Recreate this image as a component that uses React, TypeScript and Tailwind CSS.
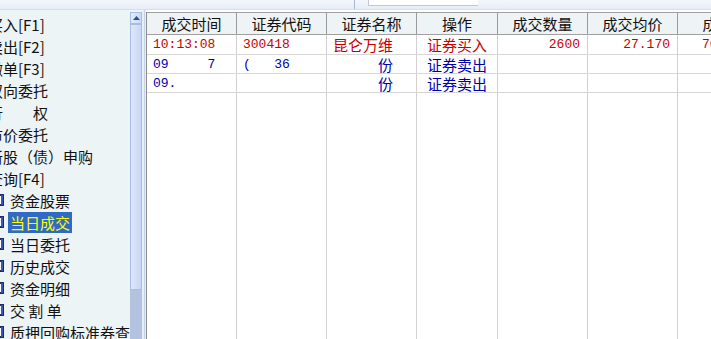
import React from "react";

const cjk = "font-['Noto_Sans_CJK_SC',sans-serif]";
const mono = "font-['Liberation_Mono','Noto_Sans_CJK_SC',monospace]";

const tree: { text: string; sub?: boolean; sel?: boolean }[] = [
  { text: "买入[F1]" },
  { text: "卖出[F2]" },
  { text: "撤单[F3]" },
  { text: "双向委托" },
  { text: "行　　权" },
  { text: "市价委托" },
  { text: "新股（债）申购" },
  { text: "查询[F4]" },
  { text: "资金股票", sub: true },
  { text: "当日成交", sub: true, sel: true },
  { text: "当日委托", sub: true },
  { text: "历史成交", sub: true },
  { text: "资金明细", sub: true },
  { text: "交 割 单", sub: true },
  { text: "质押回购标准券查", sub: true },
];

const cols = [
  { w: "w-[90px]", h: "成交时间" },
  { w: "w-[90px]", h: "证券代码" },
  { w: "w-[90px]", h: "证券名称" },
  { w: "w-[81px]", h: "操作" },
  { w: "w-[90px]", h: "成交数量" },
  { w: "w-[90px]", h: "成交均价" },
  { w: "w-[110px]", h: "成交金额" },
];

type Align = "left" | "right" | "center" | "far";
type Cell = { t: string; kind: "mono" | "cjk"; a: Align };
const rows: { color: string; cells: Cell[]; h: string }[] = [
  {
    color: "text-[#c80000]",
    h: "h-[20px]",
    cells: [
      { t: "10:13:08", kind: "mono", a: "left" },
      { t: "300418", kind: "mono", a: "left" },
      { t: "昆仑万维", kind: "cjk", a: "left" },
      { t: "证券买入", kind: "cjk", a: "center" },
      { t: "2600", kind: "mono", a: "right" },
      { t: "27.170", kind: "mono", a: "right" },
      { t: "70642.00", kind: "mono", a: "far" },
    ],
  },
  {
    color: "text-[#0000a8]",
    h: "h-[19px]",
    cells: [
      { t: "09\u00a0\u00a0\u00a0\u00a0\u00a07", kind: "mono", a: "left" },
      { t: "(\u00a0\u00a0\u00a036", kind: "mono", a: "left" },
      { t: "　　　份", kind: "cjk", a: "left" },
      { t: "证券卖出", kind: "cjk", a: "center" },
      { t: "", kind: "mono", a: "right" },
      { t: "", kind: "mono", a: "right" },
      { t: "", kind: "mono", a: "far" },
    ],
  },
  {
    color: "text-[#0000a8]",
    h: "h-[19px]",
    cells: [
      { t: "09.", kind: "mono", a: "left" },
      { t: "", kind: "mono", a: "left" },
      { t: "　　　份", kind: "cjk", a: "left" },
      { t: "证券卖出", kind: "cjk", a: "center" },
      { t: "", kind: "mono", a: "right" },
      { t: "", kind: "mono", a: "right" },
      { t: "", kind: "mono", a: "far" },
    ],
  },
];

const alignCls: Record<Align, string> = {
  left: "pl-[6px]",
  right: "justify-end pr-[7px]",
  center: "justify-center",
  far: "pl-[24px]",
};

function BookIcon() {
  return (
    <svg width="15" height="14" viewBox="0 0 15 14" className="shrink-0">
      <rect x="1" y="1" width="13" height="12" fill="#1c2a6b" />
      <rect x="3" y="3" width="9" height="8" fill="#ffffff" />
      <rect x="11" y="2" width="2" height="10" fill="#3a56b8" />
    </svg>
  );
}

export default function App() {
  return (
    <div className={`w-[711px] h-[339px] overflow-hidden bg-white flex flex-col ${cjk}`}>
      {/* top bar */}
      <div className="h-[10px] shrink-0 flex items-start bg-gradient-to-b from-[#f4f7fc] to-[#e6edf8] border-b border-[#d5dfee]">
        <div className="w-[354px] h-full" />
        <div className="w-px h-full bg-[#a9b9d2]" />
        <div className="w-[13px]" />
        <div className="w-[110px] h-[6px] bg-white border-l border-b border-[#c0c8d4]" />
      </div>

      <div className="flex flex-1 min-h-0">
        {/* tree */}
        <div className="w-[130px] shrink-0 bg-[#edf4f6] overflow-hidden pt-[3px]">
          {tree.map((it, i) => (
            <div key={i} className="h-[22px] flex items-center whitespace-nowrap text-[15px] leading-none text-[#111]">
              {it.sub ? (
                <div className="flex items-center -ml-[10px]">
                  <BookIcon />
                  <span
                    className={`ml-[3px] px-[2px] h-[21px] flex items-center ${
                      it.sel ? "bg-[#316ac5] text-[#ffff00]" : ""
                    }`}
                  >
                    {it.text}
                  </span>
                </div>
              ) : (
                <span className="-ml-[12px]">{it.text}</span>
              )}
            </div>
          ))}
        </div>

        {/* scrollbar */}
        <div className="w-[12px] shrink-0 flex flex-col pt-[2px] bg-[#eef4f7]">
          <div className="h-[12px] bg-gradient-to-r from-[#e4ecfb] to-[#c9d8f4] border border-[#a6bde6] flex items-center justify-center">
            <svg width="7" height="4" viewBox="0 0 7 4">
              <polygon points="0,4 7,4 3.5,0" fill="#2a4d96" />
            </svg>
          </div>
          <div className="h-[266px] bg-gradient-to-r from-[#dfe8fb] to-[#c6d6f4] border border-[#a6bde6]" />
          <div className="flex-1 bg-[#b3c3df]" />
        </div>

        {/* splitter */}
        <div className="w-[4px] shrink-0 bg-[#e6eef9] flex justify-center">
          <div className="w-px h-full bg-[#c5d2e6]" />
        </div>

        {/* table */}
        <div className="flex-1 min-w-0 overflow-hidden pt-[2px] bg-white">
          <div className="h-full flex flex-col border-l border-[#8c8c8c] w-[700px]">
            <div className="h-[23px] shrink-0 flex bg-[#eef3f6] border-t border-b border-[#a0a0a0]">
              {cols.map((c, i) => (
                <div
                  key={i}
                  className={`${c.w} shrink-0 border-r border-[#9a9a9a] flex items-center justify-center text-[15px] leading-none text-[#111] whitespace-nowrap`}
                >
                  {c.h}
                </div>
              ))}
            </div>
            {rows.map((r, ri) => (
              <div key={ri} className={`${r.h} shrink-0 flex border-b border-[#d6d6d6] ${r.color}`}>
                {r.cells.map((c, ci) => (
                  <div
                    key={ci}
                    className={`${cols[ci].w} shrink-0 border-r border-[#d0d0d0] flex items-center whitespace-pre overflow-hidden ${alignCls[c.a]} ${
                      c.kind === "mono" ? `${mono} text-[13px]` : "text-[15px]"
                    } leading-none`}
                  >
                    {c.t}
                  </div>
                ))}
              </div>
            ))}
            <div className="flex-1 flex">
              {cols.map((c, i) => (
                <div key={i} className={`${c.w} shrink-0 border-r border-[#d0d0d0]`} />
              ))}
            </div>
          </div>
        </div>
      </div>
    </div>
  );
}
